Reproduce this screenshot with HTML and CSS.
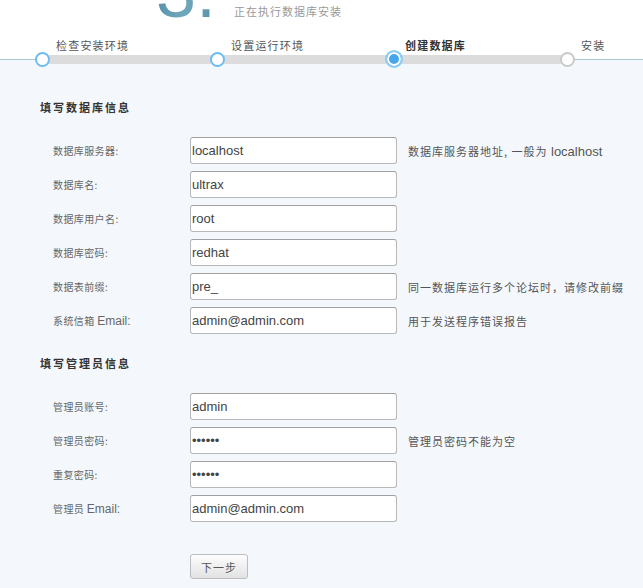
FILE: index.html
```html
<!DOCTYPE html>
<html lang="zh-CN">
<head>
<meta charset="utf-8">
<title>安装</title>
<link rel="stylesheet" href="styles.css">
</head>
<body>
<div class="top">
  <div class="brand">
    <span class="digit">3.</span>
    <span class="subtitle">正在执行数据库安装</span>
  </div>
  <div class="steps">
    <div class="step">
      <div class="step-label">检查安装环境</div>
      <div class="node-row"><span class="node done"></span><span class="bar"></span></div>
    </div>
    <div class="step">
      <div class="step-label">设置运行环境</div>
      <div class="node-row"><span class="node done"></span><span class="bar"></span></div>
    </div>
    <div class="step">
      <div class="step-label current">创建数据库</div>
      <div class="node-row"><span class="node active"></span><span class="bar"></span></div>
    </div>
    <div class="step last">
      <div class="step-label">安装</div>
      <div class="node-row"><span class="node todo"></span></div>
    </div>
  </div>
</div>

<div class="main">
  <div class="section-title">填写数据库信息</div>
  <div class="form">
    <label class="lbl">数据库服务器:</label>
    <input class="field" type="text" value="localhost">
    <span class="hint">数据库服务器地址, 一般为 <span class="en">localhost</span></span>

    <label class="lbl">数据库名:</label>
    <input class="field" type="text" value="ultrax">
    <span class="hint"></span>

    <label class="lbl">数据库用户名:</label>
    <input class="field" type="text" value="root">
    <span class="hint"></span>

    <label class="lbl">数据库密码:</label>
    <input class="field" type="text" value="redhat">
    <span class="hint"></span>

    <label class="lbl">数据表前缀:</label>
    <input class="field" type="text" value="pre_">
    <span class="hint">同一数据库运行多个论坛时，请修改前缀</span>

    <label class="lbl">系统信箱 <span class="en">Email:</span></label>
    <input class="field" type="text" value="admin@admin.com">
    <span class="hint">用于发送程序错误报告</span>
  </div>

  <div class="section-title second">填写管理员信息</div>
  <div class="form">
    <label class="lbl">管理员账号:</label>
    <input class="field" type="text" value="admin">
    <span class="hint"></span>

    <label class="lbl">管理员密码:</label>
    <input class="field" type="password" value="123456">
    <span class="hint">管理员密码不能为空</span>

    <label class="lbl">重复密码:</label>
    <input class="field" type="password" value="123456">
    <span class="hint"></span>

    <label class="lbl">管理员 <span class="en">Email:</span></label>
    <input class="field" type="text" value="admin@admin.com">
    <span class="hint"></span>
  </div>

  <div class="actions">
    <button class="btn" type="button">下一步</button>
  </div>
</div>
</body>
</html>
```

FILE: styles.css
```css
html, body {
  margin: 0;
  padding: 0;
}
body {
  font-family: "Liberation Sans", "Noto Sans CJK SC", sans-serif;
  background: #f4f8fc;
  color: #555;
  overflow: hidden;
}

.top {
  height: 59px;
  background: #fff;
  border-bottom: 1px solid #a9c8d6;
}

.brand {
  height: 38px;
  overflow: hidden;
  display: flex;
  align-items: flex-start;
}
.digit {
  display: block;
  font-family: "Liberation Sans", sans-serif;
  font-size: 72px;
  line-height: 72px;
  margin-top: -44px;
  margin-left: 156px;
  color: #5f9bb2;
  background: linear-gradient(100deg, #4f8aa3 0%, #6fa8bd 50%, #5890a8 100%);
  -webkit-background-clip: text;
  background-clip: text;
  -webkit-text-fill-color: transparent;
}
.subtitle {
  margin-left: 18px;
  margin-top: 4px;
  font-family: "Noto Sans CJK SC", sans-serif;
  font-size: 11px;
  line-height: 14px;
  letter-spacing: 1px;
  color: #999;
}

.steps {
  position: relative;
  z-index: 1;
  display: flex;
  margin-left: 34.5px;
}
.step {
  flex: 0 0 175px;
  display: flex;
  flex-direction: column;
}
.step.last {
  flex: 1 1 auto;
}
.step-label {
  padding-left: 21.5px;
  font-family: "Noto Sans CJK SC", sans-serif;
  font-size: 11px;
  line-height: 14px;
  letter-spacing: 1.2px;
  color: #555;
  white-space: nowrap;
}
.step-label.current {
  padding-left: 20.5px;
  font-weight: bold;
  color: #333;
}
.node-row {
  display: flex;
  align-items: center;
  height: 18px;
  margin-top: -2px;
}
.node {
  box-sizing: border-box;
  flex: 0 0 15px;
  width: 15px;
  height: 15px;
  border-radius: 50%;
  background: #fff;
  border: 2px solid #6ebcf0;
  position: relative;
  z-index: 1;
}
.node.active {
  flex: 0 0 18px;
  width: 18px;
  height: 18px;
  background: #4aa6ea;
  border: 2px solid #8ccdf4;
  box-shadow: inset 0 0 0 2px #fff;
}
.node.todo {
  border-color: #cacaca;
}
.bar {
  flex: 1 1 auto;
  height: 9px;
  background: #dcdcdc;
  margin-left: -2px;
  margin-right: -8px;
}

.main {
  padding: 39px 0 0 40px;
}
.section-title {
  font-family: "Noto Sans CJK SC", sans-serif;
  font-size: 11px;
  line-height: 16px;
  font-weight: bold;
  letter-spacing: 2px;
  color: #333;
  margin-bottom: 22px;
}
.section-title.second {
  margin-top: 21px;
}

.form {
  display: grid;
  grid-template-columns: 126px 207px auto;
  grid-auto-rows: 27px;
  row-gap: 7px;
  column-gap: 11px;
  padding-left: 13px;
  align-items: center;
}
.form .lbl {
  font-family: "Noto Sans CJK SC", sans-serif;
  font-size: 10px;
  letter-spacing: 0.4px;
  color: #666;
  white-space: nowrap;
}
.form .lbl .en {
  font-family: "Liberation Sans", sans-serif;
  font-size: 12px;
  letter-spacing: 0;
}
.field {
  grid-column: 2;
  box-sizing: border-box;
  width: 207px;
  height: 27px;
  margin: 0;
  padding: 0 1px;
  border: 1px solid #b8b8b8;
  border-top-color: #a0a0a0;
  border-radius: 3px;
  background: #fff;
  font-family: "Liberation Sans", sans-serif;
  font-size: 13px;
  color: #444;
  outline: none;
}
.form .hint {
  font-family: "Noto Sans CJK SC", sans-serif;
  font-size: 11px;
  letter-spacing: 1px;
  color: #555;
  white-space: nowrap;
}
.form .hint .en {
  font-family: "Liberation Sans", sans-serif;
  font-size: 13px;
  letter-spacing: 0;
}

.actions {
  margin-top: 32px;
  padding-left: 150px;
}
.btn {
  box-sizing: border-box;
  width: 58px;
  height: 25px;
  margin: 0;
  padding: 0;
  border: 1px solid #bdbdbd;
  border-radius: 3px;
  background: linear-gradient(#fdfdfd, #e2e2e2);
  font-family: "Noto Sans CJK SC", sans-serif;
  font-size: 11px;
  letter-spacing: 1px;
  color: #555;
}
```
